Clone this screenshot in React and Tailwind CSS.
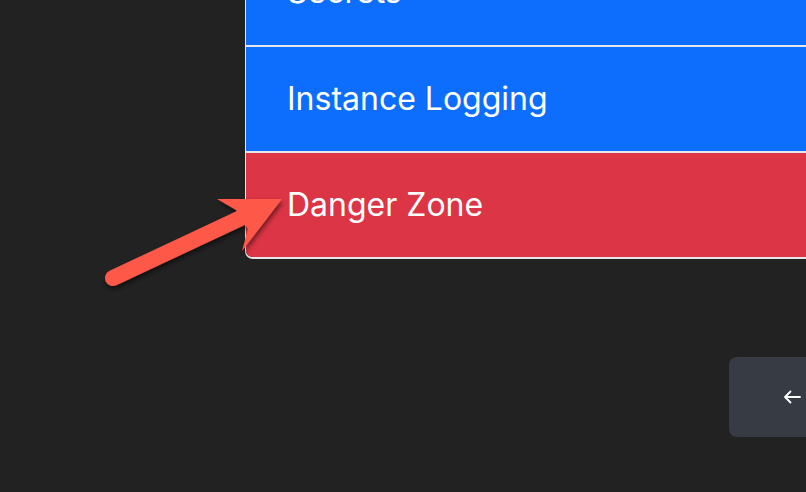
const items = [
  { label: "Secrets", color: "bg-[#0d6efd]" },
  { label: "Instance Logging", color: "bg-[#0d6efd]" },
  { label: "Danger Zone", color: "bg-[#dc3545]" },
];

export default function App() {
  return (
    <div
      className="relative w-[806px] h-[492px] overflow-hidden bg-[#222222]"
      style={{ fontFamily: "Inter, 'Noto Sans', sans-serif" }}
    >
      <div className="ml-[245px] -mt-[62px] w-[640px] border border-[#e4e6e9] border-b-2 rounded-b-lg overflow-hidden">
        {items.map((it, i) => (
          <div
            key={it.label}
            className={`${it.color} h-[106px] flex items-center pl-[41px] text-white text-[32px] leading-none ${
              i > 0 ? "border-t-2 border-[#e4e6e9]" : ""
            }`}
          >
            {it.label}
          </div>
        ))}
      </div>

      <div className="mt-[98px] ml-[729px] w-[200px] h-[80px] rounded-lg bg-[#373b43] flex items-center pl-[54px] text-white">
        <svg width="18" height="14" viewBox="0 0 18 14" fill="none" stroke="white" strokeWidth="1.8" strokeLinecap="round" strokeLinejoin="round">
          <path d="M17 7H2M7.5 1.5L2 7l5.5 5.5" />
        </svg>
      </div>

      <svg
        className="absolute left-0 top-0 pointer-events-none"
        width="806"
        height="492"
        viewBox="0 0 806 492"
      >
        <defs>
          <filter id="sh" x="-20%" y="-20%" width="140%" height="140%">
            <feDropShadow dx="1" dy="3" stdDeviation="2.5" floodColor="#000" floodOpacity="0.55" />
          </filter>
        </defs>
        <g filter="url(#sh)" fill="#fe5848" stroke="#fe5848">
          <line x1="113" y1="278" x2="243" y2="217" strokeWidth="16" strokeLinecap="round" />
          <polygon points="282,199 217,199 236,210 248,229 242,251" stroke="none" />
        </g>
      </svg>
    </div>
  );
}
